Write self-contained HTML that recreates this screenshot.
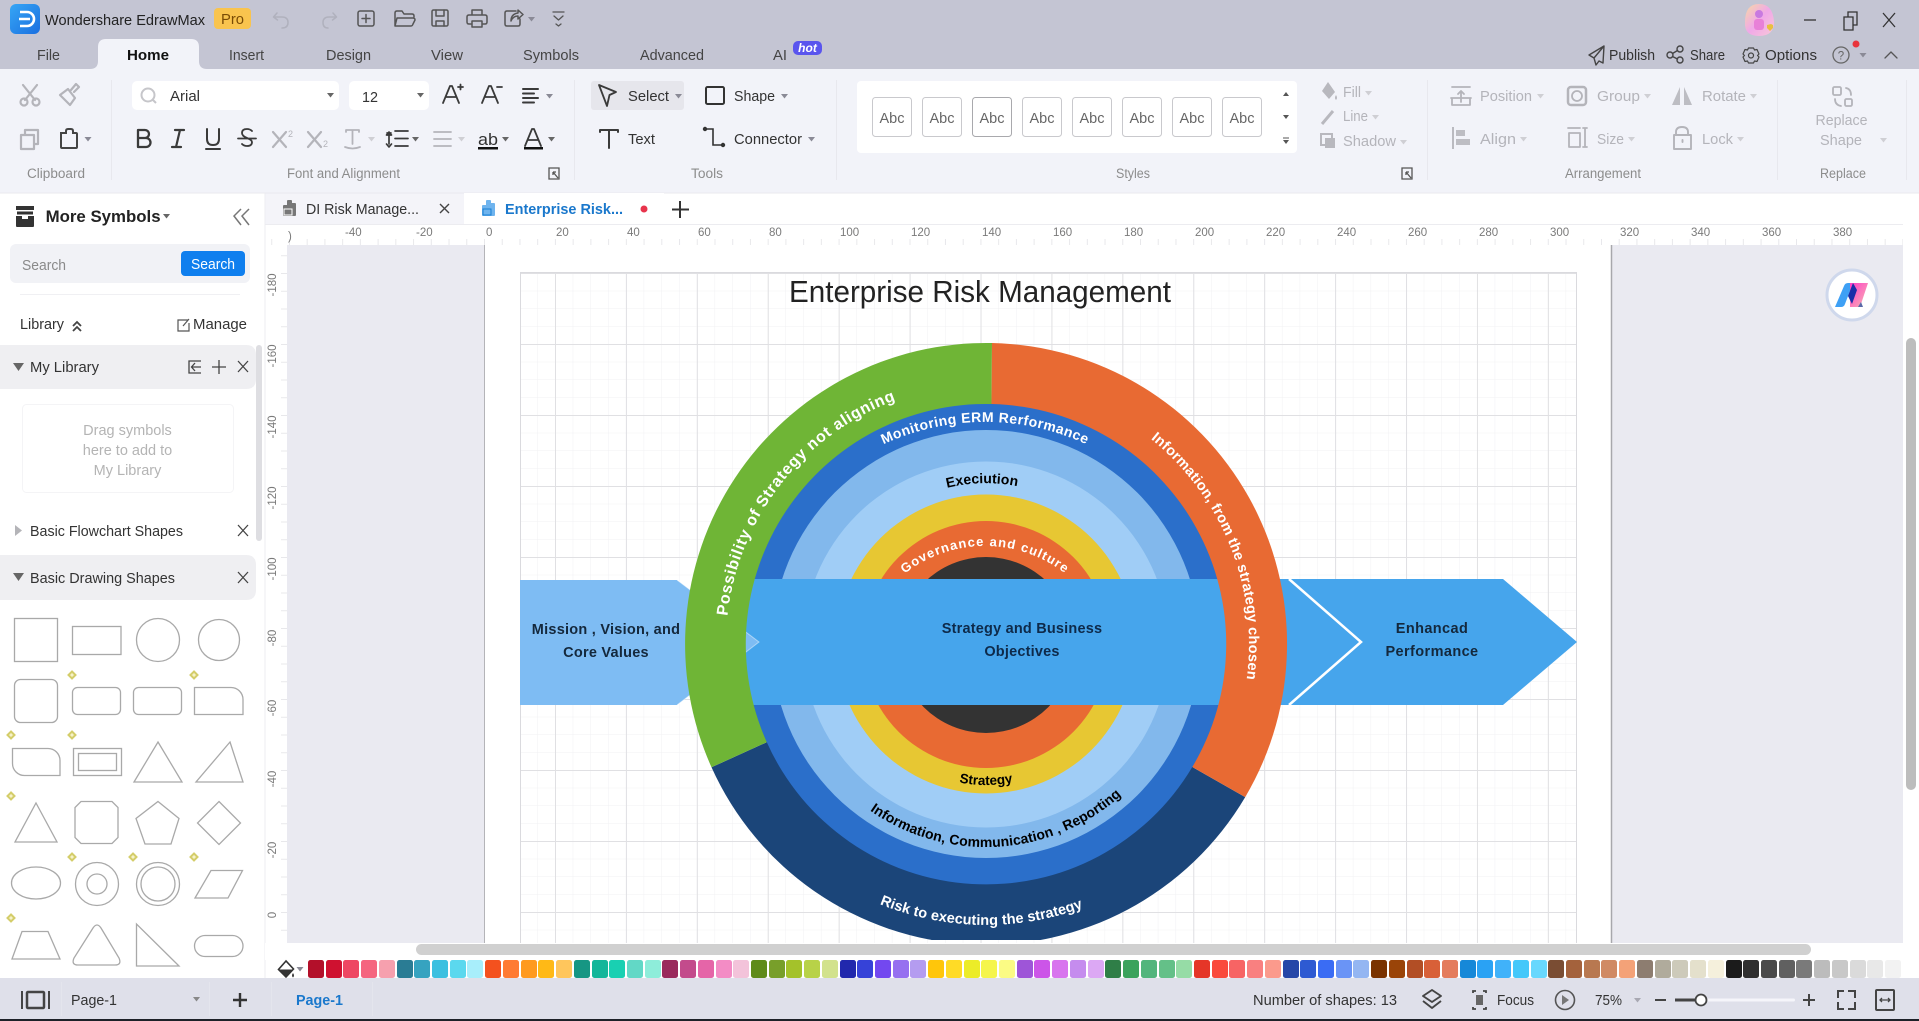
<!DOCTYPE html>
<html><head><meta charset="utf-8"><title>Wondershare EdrawMax</title>
<style>
html,body{margin:0;padding:0;width:1919px;height:1021px;overflow:hidden;background:#fff}
svg{position:absolute;left:0;top:0;display:block}
text{font-family:"Liberation Sans",Arial,sans-serif;font-size:14.5px;fill:#333}
.l{fill:#8c8c8c;font-size:13.5px}
.d{fill:#b4b4ba}
.m{text-anchor:middle}
.r{fill:#7a7a7a;font-size:11.5px}
.ic{fill:none;stroke:#555;stroke-width:1.8;stroke-linejoin:round;stroke-linecap:round}
.ig{fill:none;stroke:#b4b4ba;stroke-width:1.8;stroke-linejoin:round;stroke-linecap:round}
.k{fill:none;stroke:#3a3a3a;stroke-width:1.9;stroke-linecap:round;stroke-linejoin:round}
.s{fill:none;stroke:#a9a9a9;stroke-width:1.3}
.h{fill:#f6f2c8;stroke:#d4cd6a;stroke-width:2}
.b{font-weight:bold;letter-spacing:.4px}
.w{fill:#fff}
#pal{position:absolute;left:308px;top:960px;display:flex;gap:1.73px;z-index:2}
#pal i{display:block;width:16px;height:18px;border-radius:2.5px}
</style></head><body>
<svg width="1919" height="1021" viewBox="0 0 1919 1021">
<defs>
<pattern id="gm" x="555" y="273" width="17.73" height="17.75" patternUnits="userSpaceOnUse"><path d="M0 0V17.75M0 0H17.73" stroke="#f1f1f3" stroke-width="1" fill="none"/></pattern>
<pattern id="gM" x="555" y="273" width="70.92" height="71" patternUnits="userSpaceOnUse"><path d="M.5 0V71M0 .5H71" stroke="#e0e0e3" stroke-width="1" fill="none"/></pattern>
<pattern id="rh" x="484" y="224" width="17.73" height="21" patternUnits="userSpaceOnUse"><path d="M.5 15V21" stroke="#e8e8eb" fill="none"/></pattern>
<pattern id="rv" x="265" y="273" width="22" height="17.75" patternUnits="userSpaceOnUse"><path d="M16 .5H22" stroke="#e8e8eb" fill="none"/></pattern>
<clipPath id="cc"><rect x="480" y="245" width="1140" height="695"/></clipPath>
<linearGradient id="lg" x1="0" y1="0" x2="1" y2="1"><stop offset="0" stop-color="#36a6f5"/><stop offset="1" stop-color="#1a6fe0"/></linearGradient>
<linearGradient id="av" x1="0" y1="0" x2="1" y2="1"><stop offset="0" stop-color="#f6d9a5"/><stop offset=".5" stop-color="#f0a8e8"/><stop offset="1" stop-color="#f8c8d8"/></linearGradient>
<linearGradient id="pk" x1="0" y1="0" x2="1" y2="1"><stop offset="0" stop-color="#ff3dc8"/><stop offset="1" stop-color="#f8b8b0"/></linearGradient>
<path id="a1" d="M726 644A260 260 0 0 1 923.1 391.7"/>
<path id="a2" d="M1117.5 416.2A263 263 0 0 1 1240 712.1"/>
<path id="a3" d="M830 478.4A241 241 0 0 1 1140 478.4"/>
<path id="a4" d="M906 504.4A161 161 0 0 1 1059.1 500.7"/>
<path id="a5" d="M885.4 592.4A130 130 0 0 1 1084.6 592.4"/>
<path id="a6" d="M915 766A142 142 0 0 0 1057 766"/>
<path id="a7" d="M830.5 774.5A203 203 0 0 0 1156.3 754.6"/>
<path id="a8" d="M805.4 859.2A281 281 0 0 0 1159 865.4"/>
<path id="tr" d="M0 0h7l-3.5 4.5z"/>
</defs>

<!-- chrome backgrounds -->
<rect width="1919" height="69" fill="#c4c5d3"/>
<rect y="69" width="1919" height="124" fill="#f2f3f9"/>
<rect y="193" width="1919" height="785" fill="#fff"/>
<rect x="265" y="193" width="199" height="31" fill="#f4f4f9"/>
<rect x="287" y="245" width="1616" height="698" fill="#eaeaf1"/>
<rect x="265" y="224" width="1638" height="21" fill="#fff"/>
<rect x="265" y="224" width="1638" height="21" fill="url(#rh)"/>
<rect x="265" y="245" width="22" height="698" fill="url(#rv)"/>
<path d="M265 193V978" stroke="#eeeef2"/>
<path d="M265 224.500H1903" stroke="#ececf0"/>
<rect y="192.500" width="1919" height="1" fill="#e9e9ee"/>

<!-- home tab -->
<path d="M90 69q8 0 8-8V47q0-8 8-8h85q8 0 8 8v14q0 8 8 8z" fill="#f2f3f9"/>

<!-- title bar -->
<rect x="10" y="4" width="30" height="30" rx="6" fill="url(#lg)"/>
<path d="M20 12h7a7 7 0 0 1 0 14h-7M19 19h11" fill="none" stroke="#fff" stroke-width="2.6"/>
<text x="45" y="25" font-size="15" textLength="160" lengthAdjust="spacingAndGlyphs" style="fill:#222">Wondershare EdrawMax</text>
<rect x="214" y="8" width="37" height="21" rx="4" fill="#f9c44e"/>
<text x="221" y="24" textLength="23" lengthAdjust="spacingAndGlyphs" style="fill:#7a4c05;font-size:15px">Pro</text>
<path class="ig" d="M277 13l-3.500 4 4 3M274 17h8q6 0 6 5.500t-6 5.500" style="stroke:#b0b1bd;stroke-width:1.500"/>
<path class="ig" d="M333 13l3.500 4-4 3M336 17h-7q-6 0-6 5.500t5 5.500" style="stroke:#b0b1bd;stroke-width:1.500"/>
<rect class="ic" x="358" y="11" width="16" height="15" rx="2" style="stroke-width:1.500"/><path class="ic" d="M366 14.500v8M362 18.500h8" style="stroke-width:1.500"/>
<path class="ic" d="M395 26V13q0-2 2-2h5l2 3h8q2 0 2 2v1M395 26q0 0 2-8h16q2 0 2 2l-2 4q-.5 2-2 2z" style="stroke-width:1.500"/>
<rect class="ic" x="432" y="10" width="16" height="16" rx="1.500" style="stroke-width:1.500"/><path class="ic" d="M436 10v6h8v-6M436 26v-5h8v5" style="stroke-width:1.500"/>
<path class="ic" d="M472 15v-5h10v5M471 24h-2q-2 0-2-2v-5q0-2 2-2h16q2 0 2 2v5q0 2-2 2h-2M472 21h10v6h-10z" style="stroke-width:1.500"/>
<path class="ic" d="M516 11h-9q-2 0-2 2v11q0 2 2 2h11q2 0 2-2v-5M511 21q0-7 7-8v-3l5 4.500-5 4.500v-3q-5 0-7 5z" style="stroke-width:1.500"/>
<use href="#tr" x="528" y="17" fill="#8a8a96"/>
<path class="ic" d="M553 12h11M554 16l4.500 4 4.500-4M556 24l2.500 2 2.500-2" style="stroke-width:1.300"/>

<!-- menu -->
<g style="fill:#444">
<text x="37" y="60" textLength="23" lengthAdjust="spacingAndGlyphs" style="fill:#444">File</text>
<text x="127" y="60" textLength="42" lengthAdjust="spacingAndGlyphs" style="fill:#111;font-weight:bold">Home</text>
<text x="229" y="60" textLength="35" lengthAdjust="spacingAndGlyphs" style="fill:#444">Insert</text>
<text x="326" y="60" textLength="45" lengthAdjust="spacingAndGlyphs" style="fill:#444">Design</text>
<text x="431" y="60" textLength="32" lengthAdjust="spacingAndGlyphs" style="fill:#444">View</text>
<text x="523" y="60" textLength="56" lengthAdjust="spacingAndGlyphs" style="fill:#444">Symbols</text>
<text x="640" y="60" textLength="64" lengthAdjust="spacingAndGlyphs" style="fill:#444">Advanced</text>
<text x="773" y="60" textLength="14" lengthAdjust="spacingAndGlyphs" style="fill:#444">AI</text>
</g>
<rect x="793" y="41" width="29" height="14" rx="5" fill="#5a55ee"/>
<text x="807.500" y="52" class="m" style="fill:#fff;font-style:italic;font-size:12px;font-weight:bold">hot</text>

<!-- window -->
<path d="M1745 22q0-18 14-18t15 18q0 14-15 14t-14-14z" fill="url(#av)"/>
<circle cx="1759" cy="14" r="4" fill="#c87ae0"/><rect x="1754" y="19" width="10" height="11" rx="3" fill="#e880d8"/><path d="M1767 25l4-1 2 1v3l-3 3-3-3z" fill="#e8c040"/>
<path d="M1804 20h12" stroke="#333" stroke-width="1.300"/>
<path d="M1844 17h9v13h-9zM1848 17v-5h9v13h-4" fill="none" stroke="#333" stroke-width="1.300"/>
<path d="M1883 13l12 14M1895 13l-12 14" stroke="#333" stroke-width="1.300"/>
<path class="ic" d="M1604 46l-15 9 5 3 2 7 3-4 4 2zM1604 46l-10 12" style="stroke:#444;stroke-width:1.400"/>
<text x="1609" y="60" textLength="46" lengthAdjust="spacingAndGlyphs">Publish</text>
<circle class="ic" cx="1670" cy="55" r="3" style="stroke:#444;stroke-width:1.400"/><circle class="ic" cx="1680" cy="49" r="3" style="stroke:#444;stroke-width:1.400"/><circle class="ic" cx="1680" cy="60" r="3" style="stroke:#444;stroke-width:1.400"/><path class="ic" d="M1672.500 53.500l5-3M1672.500 56.500l5 2.500" style="stroke:#444;stroke-width:1.400"/>
<text x="1690" y="60" textLength="35" lengthAdjust="spacingAndGlyphs">Share</text>
<path class="ic" d="M1748.500 48h5l1 2 2.500-.5 2 4.500-1.500 1.500 1.500 1.500-2 4.500-2.500-.5-1 2h-5l-1-2-2.500.5-2-4.500 1.500-1.500-1.500-1.500 2-4.500 2.500.5z" style="stroke:#444;stroke-width:1.200"/><circle class="ic" cx="1751" cy="55.500" r="2.500" style="stroke:#444;stroke-width:1.200"/>
<text x="1765" y="60" textLength="52" lengthAdjust="spacingAndGlyphs">Options</text>
<circle class="ic" cx="1841" cy="55" r="8" style="stroke:#666;stroke-width:1.300"/><text x="1841" y="59.500" class="m" style="font-size:11.500px;fill:#666">?</text>
<circle cx="1856" cy="44" r="3.500" fill="#e8343c"/><use href="#tr" x="1859.500" y="53" fill="#8a8a96"/>
<path class="ic" d="M1885 58l6-6 6 6" style="stroke:#555;stroke-width:1.300"/>

<!-- clipboard -->
<g class="ig" style="stroke-width:2.200">
<path d="M23 85l12 15M37 85l-12 15"/><circle cx="24" cy="102" r="3.500"/><circle cx="36" cy="102" r="3.500"/>
<path d="M60 95l8-6 7 9-5 7zM71 90l5-6 3 3-5 5" />
<path d="M21 135h13v14h-13zM25 135v-5h13v14h-4"/>
</g>
<path d="M62 133h4v-2q0-2 2-2h3q2 0 2 2v2h3q1 0 1 1v13q0 1-1 1H62q-1 0-1-1v-14z" fill="none" stroke="#444" stroke-width="2"/>
<use href="#tr" x="84.500" y="137" fill="#8a8a96"/>
<path d="M111.500 80V180M574.500 80V180M836.500 80V180M1427.500 80V180M1777.500 80V180M1906.500 80V180" stroke="#e8e8ee"/>
<text x="27" y="178" class="l" textLength="58" lengthAdjust="spacingAndGlyphs">Clipboard</text>

<!-- font boxes -->
<rect x="132" y="81" width="207" height="29" rx="5" fill="#fff"/>
<rect x="349" y="81" width="80" height="29" rx="5" fill="#fff"/>
<circle cx="148" cy="95" r="6.500" fill="none" stroke="#c6c6ca" stroke-width="2"/><path d="M153 100l3 3" stroke="#c6c6ca" stroke-width="2"/>
<text x="170" y="101" textLength="30" lengthAdjust="spacingAndGlyphs">Arial</text>
<use href="#tr" x="327" y="93" fill="#666"/>
<text x="362" y="102" textLength="16" lengthAdjust="spacingAndGlyphs">12</text>
<use href="#tr" x="417" y="93" fill="#666"/>
<path class="k" d="M443 103l7-17h2l7 17M446 97h10M458 87h5M460.500 84.500v5" style="stroke-width:1.800"/>
<path class="k" d="M482 103l7-17h2l7 17M485 97h10M497 87h5" style="stroke-width:1.800"/>
<path class="k" d="M523 89h15M523 93.500h11M523 98h15M523 102.500h11" style="stroke-width:2"/>
<use href="#tr" x="546" y="94" fill="#8a8a96"/>
<path class="k" d="M138 130h7a4 4 0 0 1 0 8h-7zM138 138h8a4.500 4.500 0 0 1 0 9h-8z" style="stroke-width:2.300"/>
<path class="k" d="M175 130h9M172 147h9M180 130l-4 17" style="stroke-width:2.200"/>
<path class="k" d="M207 129v10q0 6 6 6t6-6v-10M206 149h14" style="stroke-width:2"/>
<path class="k" d="M252 131q-2-2-5-2-5 0-5 4 0 3 5 5t5 4q0 4-5 4-3 0-5-2M238 138.500h18" style="stroke-width:1.800"/>
<path class="ig" d="M273 132l13 15M286 132l-13 15" style="stroke-width:2.200"/><text x="288" y="137" class="d" style="font-size:9px">2</text>
<path class="ig" d="M308 132l13 15M321 132l-13 15" style="stroke-width:2.200"/><text x="323" y="147" class="d" style="font-size:9px">2</text>
<path class="ig" d="M346 130h13M352.500 130v14M346 130v2M359 130v2M345 147q7.500 3 15 0" />
<use href="#tr" x="368" y="137" fill="#cfcfd4"/>
<path class="k" d="M389 132l-2.500 3h5zM387 133h4M389 133v11M386.500 144l2.500 3 2.500-3M395 131h13M395 138.500h13M395 146h13" style="stroke-width:1.700"/>
<use href="#tr" x="412" y="137" fill="#666"/>
<path class="ig" d="M434 132h17M434 139h17M434 146h17"/>
<use href="#tr" x="458" y="137" fill="#cfcfd4"/>
<text x="478" y="145" style="font-size:17px;fill:#333" textLength="20" lengthAdjust="spacingAndGlyphs">ab</text><rect x="478" y="147" width="20" height="2.500" fill="#111"/>
<use href="#tr" x="502" y="137" fill="#666"/>
<path class="k" d="M525 146l7-17h2l7 17M528 140h10" style="stroke-width:1.800"/><rect x="524" y="147" width="19" height="2.500" fill="#111"/>
<use href="#tr" x="548" y="137" fill="#666"/>
<text x="287" y="178" class="l" textLength="113" lengthAdjust="spacingAndGlyphs">Font and Alignment</text>
<path d="M549 168h10v11h-10zM553 172l5 6M553 172h3M553 172v3" fill="none" stroke="#555" stroke-width="1.300"/>

<!-- tools -->
<rect x="591" y="81" width="93" height="29" rx="3" fill="#e6e6ec"/>
<path class="k" d="M599 85l17 7-6.500 3-2.500 11z" style="stroke-width:1.800"/>
<text x="628" y="101" textLength="41" lengthAdjust="spacingAndGlyphs">Select</text>
<use href="#tr" x="675" y="94" fill="#8a8a96"/>
<rect x="706" y="87" width="18" height="17" rx="1.500" fill="none" stroke="#333" stroke-width="2"/>
<text x="734" y="101" textLength="41" lengthAdjust="spacingAndGlyphs">Shape</text>
<use href="#tr" x="781" y="94" fill="#8a8a96"/>
<path class="k" d="M600 130h18M600 130v2M618 130v2M609 130v18" style="stroke-width:2"/>
<text x="628" y="144" textLength="27" lengthAdjust="spacingAndGlyphs">Text</text>
<path d="M706 129h7v16h9" fill="none" stroke="#333" stroke-width="1.600"/><circle cx="705" cy="129" r="2.200" fill="#333"/><circle cx="723" cy="145" r="2.200" fill="#333"/>
<text x="734" y="144" textLength="68" lengthAdjust="spacingAndGlyphs">Connector</text>
<use href="#tr" x="808" y="137" fill="#8a8a96"/>
<text x="691" y="178" class="l" textLength="32" lengthAdjust="spacingAndGlyphs">Tools</text>

<!-- styles -->
<rect x="857" y="81" width="440" height="72" rx="4" fill="#fff"/>
<g fill="#fff" stroke="#c9c9cd">
<rect x="872.500" y="97.500" width="39" height="39" rx="3"/><rect x="922.500" y="97.500" width="39" height="39" rx="3"/><rect x="972.500" y="97.500" width="39" height="39" rx="3" stroke="#a9a9ad"/><rect x="1022.500" y="97.500" width="39" height="39" rx="3"/><rect x="1072.500" y="97.500" width="39" height="39" rx="3"/><rect x="1122.500" y="97.500" width="39" height="39" rx="3"/><rect x="1172.500" y="97.500" width="39" height="39" rx="3"/><rect x="1222.500" y="97.500" width="39" height="39" rx="3"/>
</g>
<g style="font-size:14px">
<text x="892" y="123" class="m" style="fill:#666">Abc</text><text x="942" y="123" class="m" style="fill:#666">Abc</text><text x="992" y="123" class="m" style="fill:#666">Abc</text><text x="1042" y="123" class="m" style="fill:#666">Abc</text><text x="1092" y="123" class="m" style="fill:#666">Abc</text><text x="1142" y="123" class="m" style="fill:#666">Abc</text><text x="1192" y="123" class="m" style="fill:#666">Abc</text><text x="1242" y="123" class="m" style="fill:#666">Abc</text>
</g>
<path d="M1283 96l3-4 3 4zM1283 115l3 4 3-4zM1283 137h6M1283 140l3 4 3-4z" fill="#555" stroke="none"/><path d="M1283 138h6" stroke="#555"/>
<path d="M1328 82l-6 9 7 8 6-7zM1336 95q2 3 0 5-2-2 0-5z" fill="#b8b8be"/>
<text x="1343" y="97" class="d" textLength="18" lengthAdjust="spacingAndGlyphs">Fill</text><use href="#tr" x="1365" y="91" fill="#cfcfd4"/>
<path d="M1322 124l11-13" stroke="#b8b8be" stroke-width="3"/>
<text x="1343" y="121" class="d" textLength="25" lengthAdjust="spacingAndGlyphs">Line</text><use href="#tr" x="1372" y="115" fill="#cfcfd4"/>
<rect x="1321" y="134" width="11" height="11" fill="none" stroke="#b8b8be" stroke-width="2"/><rect x="1325" y="138" width="10" height="10" fill="#b8b8be"/>
<text x="1343" y="146" class="d" textLength="53" lengthAdjust="spacingAndGlyphs">Shadow</text><use href="#tr" x="1400" y="140" fill="#cfcfd4"/>
<text x="1116" y="178" class="l" textLength="34" lengthAdjust="spacingAndGlyphs">Styles</text>
<path d="M1402 168h10v11h-10zM1406 172l5 6M1406 172h3M1406 172v3" fill="none" stroke="#555" stroke-width="1.300"/>

<!-- arrangement -->
<path class="ig" d="M1452 87h18M1461 102V91M1458 94l3-3 3 3M1452 98v7h18v-7z M1451 98h20"/>
<text x="1480" y="101" class="d" textLength="52" lengthAdjust="spacingAndGlyphs">Position</text><use href="#tr" x="1537" y="94" fill="#cfcfd4"/>
<rect class="ig" x="1568" y="87" width="18" height="18" rx="3" style="stroke-width:2.500"/><circle class="ig" cx="1577" cy="96" r="5"/>
<text x="1597" y="101" class="d" textLength="43" lengthAdjust="spacingAndGlyphs">Group</text><use href="#tr" x="1644" y="94" fill="#cfcfd4"/>
<path d="M1680 87l-8 18h8zM1684 87l8 18h-8z" fill="#bdbdc3"/>
<text x="1702" y="101" class="d" textLength="44" lengthAdjust="spacingAndGlyphs">Rotate</text><use href="#tr" x="1750" y="94" fill="#cfcfd4"/>
<path d="M1453 127v22" stroke="#b4b4ba" stroke-width="1.800"/><rect x="1456" y="130" width="9" height="6" fill="#bdbdc3"/><rect x="1456" y="139" width="14" height="6" fill="#bdbdc3"/>
<text x="1480" y="144" class="d" textLength="36" lengthAdjust="spacingAndGlyphs">Align</text><use href="#tr" x="1520" y="137" fill="#cfcfd4"/>
<path class="ig" d="M1568 128h12M1569 133h11v14h-11zM1585 128v19M1583 128h4M1583 147h4"/>
<text x="1597" y="144" class="d" textLength="27" lengthAdjust="spacingAndGlyphs">Size</text><use href="#tr" x="1628" y="137" fill="#cfcfd4"/>
<path class="ig" d="M1676 135v-3q0-5 6-5t6 5v3M1674 135h17v14h-17zM1682.500 140v2" style="stroke-width:1.900"/>
<text x="1702" y="144" class="d" textLength="31" lengthAdjust="spacingAndGlyphs">Lock</text><use href="#tr" x="1737" y="137" fill="#cfcfd4"/>
<text x="1565" y="178" class="l" textLength="76" lengthAdjust="spacingAndGlyphs">Arrangement</text>
<rect class="ig" x="1833" y="87" width="8" height="8" rx="1.500"/><rect class="ig" x="1845" y="99" width="7" height="7" rx="1.500"/><path class="ig" d="M1846 88q5 1 5 7M1841 106q-6-1-6-7"/>
<text x="1815.500" y="125" class="d" textLength="52" lengthAdjust="spacingAndGlyphs">Replace</text>
<text x="1820" y="145" class="d" textLength="42" lengthAdjust="spacingAndGlyphs">Shape</text>
<use href="#tr" x="1880" y="138" fill="#cfcfd4"/>
<text x="1820" y="178" class="l" textLength="46" lengthAdjust="spacingAndGlyphs">Replace</text>

<!-- doc tabs -->
<rect x="464" y="193" width="200" height="31" fill="#fff"/>
<path d="M283 215v-9q0-1 1-1h3v-4q0-1 1-1h3q1 0 1 1v2h3q1 0 1 1v11q0 1-1 1h-11q-1 0-1-1z" fill="#777"/><rect x="284" y="209" width="8" height="6" fill="none" stroke="#fff"/>
<text x="306" y="214" textLength="113" lengthAdjust="spacingAndGlyphs">DI Risk Manage...</text>
<path d="M440 204l9 9M449 204l-9 9" stroke="#444" stroke-width="1.400"/>
<path d="M482 215v-9q0-1 1-1h3v-4q0-1 1-1h3q1 0 1 1v2h3q1 0 1 1v11q0 1-1 1h-11q-1 0-1-1z" fill="#6fb4ee"/><rect x="483" y="209" width="8" height="6" fill="none" stroke="#1a7fd4"/>
<text x="505" y="214" textLength="118" lengthAdjust="spacingAndGlyphs" style="fill:#1a78cc;font-weight:bold">Enterprise Risk...</text>
<circle cx="644" cy="209" r="3.500" fill="#e8344c"/>
<path d="M680 201v17M672 209.500h17" stroke="#333" stroke-width="2"/>

<!-- rulers -->
<g class="r">
<text x="288" y="240" class="r">)</text>
<text x="345" y="236" class="r">-40</text><text x="416" y="236" class="r">-20</text><text x="486" y="236" class="r">0</text><text x="556" y="236" class="r">20</text><text x="627" y="236" class="r">40</text><text x="698" y="236" class="r">60</text><text x="769" y="236" class="r">80</text><text x="840" y="236" class="r">100</text><text x="911" y="236" class="r">120</text><text x="982" y="236" class="r">140</text><text x="1053" y="236" class="r">160</text><text x="1124" y="236" class="r">180</text><text x="1195" y="236" class="r">200</text><text x="1266" y="236" class="r">220</text><text x="1337" y="236" class="r">240</text><text x="1408" y="236" class="r">260</text><text x="1479" y="236" class="r">280</text><text x="1550" y="236" class="r">300</text><text x="1620" y="236" class="r">320</text><text x="1691" y="236" class="r">340</text><text x="1762" y="236" class="r">360</text><text x="1833" y="236" class="r">380</text>
</g>
<text transform="translate(276 285) rotate(-90)" class="r m">-180</text>
<text transform="translate(276 356) rotate(-90)" class="r m">-160</text>
<text transform="translate(276 427) rotate(-90)" class="r m">-140</text>
<text transform="translate(276 498) rotate(-90)" class="r m">-120</text>
<text transform="translate(276 569) rotate(-90)" class="r m">-100</text>
<text transform="translate(276 638) rotate(-90)" class="r m">-80</text>
<text transform="translate(276 708) rotate(-90)" class="r m">-60</text>
<text transform="translate(276 779) rotate(-90)" class="r m">-40</text>
<text transform="translate(276 850) rotate(-90)" class="r m">-20</text>
<text transform="translate(276 915) rotate(-90)" class="r m">0</text>

<!-- page -->
<rect x="485" y="245" width="1126" height="698" fill="#fff"/>
<path d="M484.500 245V943" stroke="#b4b4b8"/><path d="M1611.500 245V943" stroke="#a8a8ac" stroke-width="1.500"/>
<rect x="520" y="272" width="1057" height="671" fill="url(#gm)"/>
<rect x="520" y="272" width="1057" height="671" fill="url(#gM)"/>
<path d="M520.500 943V272.500H1576.500V943" fill="none" stroke="#dadade"/>

<!-- diagram -->
<text x="980" y="302" class="m" style="font-size:30.500px;fill:#222" textLength="382" lengthAdjust="spacingAndGlyphs">Enterprise Risk Management</text>
<g clip-path="url(#cc)">
<path d="M1224 579H1503L1577 642 1503 705H1224z" fill="#46a5ec"/>
<circle cx="986" cy="644" r="241" fill="#2b6fca"/>
<circle cx="986" cy="644" r="214" fill="#82b8ec"/>
<circle cx="986" cy="644.500" r="183" fill="#a0cdf6"/>
<circle cx="986" cy="644" r="149.500" fill="#e7c733"/>
<circle cx="986" cy="644.500" r="123.500" fill="#e86a33"/>
<circle cx="986" cy="645" r="88" fill="#333"/>
<path d="M740 579H1289L1361 642 1289 705H740z" fill="#46a5ec"/>
<path d="M1289 579L1361 642 1289 705" fill="none" stroke="#fff" stroke-width="2.500"/>
<path d="M520 580H677L759 642 677 705H520z" fill="#7ebcf3"/>
<path d="M677 580L759 642 677 705" fill="none" stroke="#fff" stroke-width="1" opacity=".45"/>
<path d="M711.500 767.300A301 301 0 0 0 1245.200 797.100L1192.300 767A240 240 0 0 1 766.800 742.200z" fill="#1b4579"/>
<path d="M992 343.060A301 301 0 0 0 711.500 767.300L766.800 742.200A240 240 0 0 1 991.500 404.060z" fill="#6fb536"/>
<path d="M992 343.060A301 301 0 0 1 1245.200 797.100L1192.300 767A240 240 0 0 0 991.500 404.060z" fill="#e86a33"/>
<g style="font-weight:bold">
<text style="fill:#fff;font-size:16px;font-weight:bold;letter-spacing:.7px" text-anchor="middle"><textPath href="#a1" startOffset="50%">Possibility of Strategy not aligning</textPath></text>
<text style="fill:#fff;font-size:14.500px;font-weight:bold;letter-spacing:.25px" text-anchor="middle"><textPath href="#a2" startOffset="51%">Information, from the strategy chosen</textPath></text>
<text style="fill:#fff;font-size:14px;font-weight:bold;letter-spacing:.45px" text-anchor="middle"><textPath href="#a3" startOffset="50%">Monitoring ERM Rerformance</textPath></text>
<text style="fill:#000;font-size:14px;font-weight:bold" text-anchor="middle"><textPath href="#a4" startOffset="50%">Execiution</textPath></text>
<text style="fill:#fff;font-size:13px;font-weight:bold;letter-spacing:1.1px" text-anchor="middle"><textPath href="#a5" startOffset="50%">Governance and culture</textPath></text>
<text style="fill:#000;font-size:13.500px;font-weight:bold" text-anchor="middle"><textPath href="#a6" startOffset="50%">Strategy</textPath></text>
<text style="fill:#000;font-size:14px;font-weight:bold;letter-spacing:.08px" text-anchor="middle"><textPath href="#a7" startOffset="50%">Information, Communication , Reporting</textPath></text>
<text style="fill:#fff;font-size:14.500px;font-weight:bold;letter-spacing:.05px" text-anchor="middle"><textPath href="#a8" startOffset="50%">Risk to executing the strategy</textPath></text>
</g>
</g>
<g style="font-weight:bold">
<text x="1022" y="633" class="m" style="font-size:14.500px;font-weight:bold;fill:#0e2a4a;letter-spacing:.2px">Strategy and Business</text>
<text x="1022" y="656" class="m" style="font-size:14.500px;font-weight:bold;fill:#0e2a4a;letter-spacing:.2px">Objectives</text>
<text x="606" y="634" class="m" style="font-size:14.500px;font-weight:bold;fill:#14283c;letter-spacing:.25px">Mission , Vision, and</text>
<text x="606" y="657" class="m" style="font-size:14.500px;font-weight:bold;fill:#14283c;letter-spacing:.25px">Core Values</text>
<text x="1432" y="633" class="m" style="font-size:14.500px;font-weight:bold;fill:#14283c;letter-spacing:.4px">Enhancad</text>
<text x="1432" y="656" class="m" style="font-size:14.500px;font-weight:bold;fill:#14283c;letter-spacing:.4px">Performance</text>
</g>

<!-- scroll bars -->
<rect x="265" y="943" width="1654" height="17" fill="#fff"/>
<rect x="416" y="944" width="1395" height="11" rx="5.500" fill="#d0d0d0"/>
<rect x="1903" y="224" width="16" height="736" fill="#fff"/>
<rect x="1906" y="338" width="10" height="452" rx="5" fill="#bdbdbd"/>

<!-- badge -->
<circle cx="1852" cy="295" r="25" fill="#fff" stroke="#cfd8ec" stroke-width="3"/>
<path d="M1835 307l9-21q1-3 4-3h5l-8 21q-1 3-4 3z" fill="#3ea0f5"/>
<path d="M1850 283h18l-8 24h-10z" fill="url(#pk)"/>
<path d="M1853 283l-5 13 4 8 5-14z" fill="#1a2ea8"/>
<path d="M1858 307l3-5 2 5z" fill="#5a6aa8"/>

<!-- sidebar -->
<rect x="16" y="206" width="18" height="4" fill="#333"/><rect x="17" y="211.500" width="16" height="3" fill="#333"/><path d="M16 216h6v3h6v-3h6v10q0 1-1 1H17q-1 0-1-1z" fill="#333"/>
<text x="45.600" y="222" textLength="115" lengthAdjust="spacingAndGlyphs" style="font-size:16.500px;font-weight:bold;fill:#222">More Symbols</text>
<use href="#tr" x="163" y="214" fill="#666"/>
<path d="M241 209l-7 7 7 9M249 209l-7 7 7 9" fill="none" stroke="#777" stroke-width="1.500"/>
<rect x="10" y="244" width="240" height="39" rx="6" fill="#f1f2f6"/>
<text x="22" y="270" textLength="44" lengthAdjust="spacingAndGlyphs" style="fill:#8a8a8a">Search</text>
<rect x="181" y="251" width="64" height="25" rx="4" fill="#0f7fee"/>
<text x="191" y="269" textLength="44" lengthAdjust="spacingAndGlyphs" style="fill:#fff">Search</text>
<path d="M20 294.500H240" stroke="#f0f0f3"/>
<text x="20" y="329" textLength="44" lengthAdjust="spacingAndGlyphs">Library</text>
<path d="M73 326l4-4 4 4M73 331l4-4 4 4" fill="none" stroke="#444" stroke-width="1.800"/>
<path d="M188 320h-10v11h11v-8M183 326l6-7" fill="none" stroke="#555" stroke-width="1.200"/>
<text x="193" y="329" textLength="54" lengthAdjust="spacingAndGlyphs">Manage</text>
<path d="M0 345H246q10 0 10 10v24q0 10-10 10H0z" fill="#efeff2"/>
<path d="M13 363h11l-5.500 8z" fill="#666"/>
<text x="30" y="372" textLength="69" lengthAdjust="spacingAndGlyphs">My Library</text>
<path d="M201 361h-12v12h12M201 367h-9M195 363l-3.500 4 3.500 4" fill="none" stroke="#444" stroke-width="1.300"/>
<path d="M219 360v14M212 367h14M238 361l10 11M248 361l-10 11" fill="none" stroke="#444" stroke-width="1.300"/>
<rect x="22.500" y="404.500" width="211" height="88" rx="4" fill="none" stroke="#f4f4f6"/>
<text x="127.500" y="435" class="m" style="fill:#b4b4b4">Drag symbols</text>
<text x="127.500" y="455" class="m" style="fill:#b4b4b4">here to add to</text>
<text x="127.500" y="475" class="m" style="fill:#b4b4b4">My Library</text>
<rect x="256" y="345" width="6" height="196" rx="3" fill="#dedee2"/>
<path d="M15 525v11l7-5.500z" fill="#b4b4b8"/>
<text x="30" y="536" textLength="153" lengthAdjust="spacingAndGlyphs">Basic Flowchart Shapes</text>
<path d="M238 525l10 11M248 525l-10 11" stroke="#444" stroke-width="1.300"/>
<path d="M0 555H246q10 0 10 10v25q0 10-10 10H0z" fill="#efeff2"/>
<path d="M13 573h11l-5.500 8z" fill="#666"/>
<text x="30" y="583" textLength="145" lengthAdjust="spacingAndGlyphs">Basic Drawing Shapes</text>
<path d="M238 572l10 11M248 572l-10 11" stroke="#444" stroke-width="1.300"/>

<!-- shapes -->
<g class="s">
<rect class="s" x="14.500" y="618.500" width="43" height="43"/>
<rect class="s" x="72.500" y="626.500" width="48.500" height="28"/>
<circle class="s" cx="158" cy="640" r="21.500"/>
<circle class="s" cx="219" cy="640" r="20.500"/>
<rect class="s" x="14.500" y="679.500" width="43" height="43" rx="6"/>
<rect class="s" x="72.500" y="687.500" width="48" height="27" rx="5"/>
<rect class="s" x="133.500" y="687.500" width="48" height="27" rx="5"/>
<path class="s" d="M194.500 687.500H231a12 12 0 0 1 12 12v15H194.500z"/>
<path class="s" d="M12.500 748.500H48a12 12 0 0 1 12 12v15H24.500a12 12 0 0 1-12-12z"/>
<rect class="s" x="73.500" y="748.500" width="48" height="27"/>
<rect class="s" x="78.500" y="753.500" width="38" height="17"/>
<path class="s" d="M158 742l24 40h-48z"/>
<path class="s" d="M230 742l13 40h-47z"/>
<path class="s" d="M36 803l21 39H15z"/>
<path class="s" d="M81 801.500h31l6 6v30l-6 6H81l-6-6v-30z"/>
<path class="s" d="M158 801.500l21 17-8 25.500h-26l-9-25.500z"/>
<path class="s" d="M219 801.500l21.500 21.500-21.500 21.500-21.500-21.500z"/>
<ellipse class="s" cx="36" cy="883" rx="24.500" ry="16"/>
<circle class="s" cx="97" cy="884" r="21.500"/><circle class="s" cx="97" cy="884" r="10"/>
<circle class="s" cx="158" cy="884" r="21.500"/><circle class="s" cx="158" cy="884" r="17"/>
<path class="s" d="M211 870.500h31.500l-14.500 27.500H195z"/>
<path class="s" d="M22 931.500h26l12 27.500H12z"/>
<path class="s" d="M93 928q4-6 8 0l18 30q3 7-4 7H78q-7 0-4-7z"/>
<path class="s" d="M136.500 924v42H179z"/>
<rect class="s" x="194.500" y="935.500" width="48.500" height="21" rx="10.500"/>
</g>
<g>
<path class="h" d="M72 671.500l3.500 3.500-3.500 3.500-3.500-3.500z"/><path class="h" d="M194 671.500l3.500 3.500-3.500 3.500-3.500-3.500z"/>
<path class="h" d="M11 731.500l3.500 3.500-3.500 3.500-3.500-3.500z"/><path class="h" d="M72 731.500l3.500 3.500-3.500 3.500-3.500-3.500z"/>
<path class="h" d="M11 792.500l3.500 3.500-3.500 3.500-3.500-3.500z"/>
<path class="h" d="M72 853.500l3.500 3.500-3.500 3.500-3.500-3.500z"/><path class="h" d="M133 853.500l3.500 3.500-3.500 3.500-3.500-3.500z"/><path class="h" d="M194 853.500l3.500 3.500-3.500 3.500-3.500-3.500z"/>
<path class="h" d="M11 914.500l3.500 3.500-3.500 3.500-3.500-3.500z"/>
</g>

<!-- palette icon -->
<path d="M286 961l-7.500 8.500 7.500 7.500 7.500-8z" fill="none" stroke="#333" stroke-width="1.600"/><path d="M279 969.500h14l-7 7.500z" fill="#333"/><path d="M293 973q2 3 0 4.500-2-1.500 0-4.500z" fill="#333"/>
<use href="#tr" x="296.500" y="967" fill="#8a8a96"/>

<!-- status bar -->
<rect y="978" width="1919" height="41" fill="#dfe0ea"/>
<rect y="1019" width="1919" height="2" fill="#1d2128"/>
<path d="M22 991v18M49 991v18" stroke="#444" stroke-width="2"/><rect x="27" y="992" width="17" height="16" rx="1" fill="none" stroke="#444" stroke-width="2.500"/>
<path d="M61.500 982V1016M209.500 982V1016M271.500 982V1016M372.500 982V1016" stroke="#e4e5ed"/>
<text x="71" y="1005" textLength="46" lengthAdjust="spacingAndGlyphs">Page-1</text>
<use href="#tr" x="193" y="997" fill="#888"/>
<path d="M240 993v14M233 1000h14" stroke="#333" stroke-width="2.400"/>
<text x="296" y="1005" textLength="47" lengthAdjust="spacingAndGlyphs" style="fill:#1a78cc;font-weight:bold">Page-1</text>
<text x="1253" y="1005" textLength="144" lengthAdjust="spacingAndGlyphs">Number of shapes: 13</text>
<path d="M1432 990l9 6-9 6-9-6zM1423 1001l9 7 9-7" fill="none" stroke="#444" stroke-width="1.900" stroke-linejoin="round"/>
<path d="M1473 993v-2h3M1483 991h3v2M1473 1007v2h3M1483 1009h3v-2" fill="none" stroke="#444" stroke-width="1.800"/><rect x="1476" y="995" width="7" height="10" fill="#666"/>
<text x="1497" y="1005" textLength="37" lengthAdjust="spacingAndGlyphs">Focus</text>
<circle cx="1565" cy="1000" r="9.500" fill="none" stroke="#555" stroke-width="1.600"/><path d="M1562 995l7 5-7 5z" fill="#777"/>
<text x="1595" y="1005" textLength="27" lengthAdjust="spacingAndGlyphs">75%</text>
<use href="#tr" x="1634" y="998" fill="#a8a8b2"/>
<path d="M1655 1000h11" stroke="#444" stroke-width="2"/>
<rect x="1675" y="998.500" width="120" height="3" rx="1.500" fill="#f5f5fa"/><rect x="1675" y="998.500" width="26" height="3" fill="#444"/>
<circle cx="1701" cy="1000" r="5.500" fill="#fff" stroke="#444" stroke-width="1.800"/>
<path d="M1809 994v12M1803 1000h12" stroke="#444" stroke-width="2"/>
<path d="M1838 998v-7h6M1848 991h7v7M1838 1002v7h6M1848 1009h7v-7" fill="none" stroke="#444" stroke-width="2"/>
<rect x="1876" y="990" width="18" height="20" rx="1" fill="none" stroke="#444" stroke-width="2"/><path d="M1880 1000h10M1882 998l-2 2 2 2M1888 998l2 2-2 2" fill="none" stroke="#444" stroke-width="1.300"/>
</svg>

<div id="pal"><i style="background:#b3102a"></i><i style="background:#cf1130"></i><i style="background:#ee4763"></i><i style="background:#f5657f"></i><i style="background:#f6a0ae"></i><i style="background:#2a7c94"></i><i style="background:#36a3c0"></i><i style="background:#3cc0e0"></i><i style="background:#5bd8ee"></i><i style="background:#a8eefb"></i><i style="background:#f4511e"></i><i style="background:#ff7b33"></i><i style="background:#ff9a1f"></i><i style="background:#ffb916"></i><i style="background:#ffc65c"></i><i style="background:#169683"></i><i style="background:#13b69a"></i><i style="background:#19d0b2"></i><i style="background:#62d8c6"></i><i style="background:#8eedda"></i><i style="background:#9a2a5c"></i><i style="background:#c34b8c"></i><i style="background:#e565a8"></i><i style="background:#f38cc5"></i><i style="background:#f3c3da"></i><i style="background:#5f8b1a"></i><i style="background:#789f2a"></i><i style="background:#a4c22a"></i><i style="background:#b8d248"></i><i style="background:#d2e28c"></i><i style="background:#2128ad"></i><i style="background:#3642d8"></i><i style="background:#7348f0"></i><i style="background:#9670f0"></i><i style="background:#b49cf0"></i><i style="background:#ffc60a"></i><i style="background:#ffdb26"></i><i style="background:#ecec28"></i><i style="background:#f5f54c"></i><i style="background:#fbfb84"></i><i style="background:#9e55d8"></i><i style="background:#cc55e8"></i><i style="background:#d874ee"></i><i style="background:#c58cee"></i><i style="background:#dca8f4"></i><i style="background:#2f7e47"></i><i style="background:#3ba35c"></i><i style="background:#52b57c"></i><i style="background:#64c088"></i><i style="background:#96dca6"></i><i style="background:#e53628"></i><i style="background:#fa4a3c"></i><i style="background:#f76464"></i><i style="background:#f98080"></i><i style="background:#fb9a8c"></i><i style="background:#2647a8"></i><i style="background:#2e5ad2"></i><i style="background:#3a6cf4"></i><i style="background:#6a94f6"></i><i style="background:#94b6f2"></i><i style="background:#7a3300"></i><i style="background:#9a4408"></i><i style="background:#b24e25"></i><i style="background:#d86038"></i><i style="background:#e47c5c"></i><i style="background:#1688d8"></i><i style="background:#2aa2f4"></i><i style="background:#40b2fa"></i><i style="background:#44c8fa"></i><i style="background:#68d8fe"></i><i style="background:#7a4d33"></i><i style="background:#a4623c"></i><i style="background:#b87850"></i><i style="background:#d08a64"></i><i style="background:#f4a278"></i><i style="background:#8d7d70"></i><i style="background:#b0ab9c"></i><i style="background:#cdcaba"></i><i style="background:#e4e0cc"></i><i style="background:#f5f0dc"></i><i style="background:#1b1b1b"></i><i style="background:#2f2f2f"></i><i style="background:#4a4a4a"></i><i style="background:#606060"></i><i style="background:#7a7a7a"></i><i style="background:#bcbcbc"></i><i style="background:#c8c8c8"></i><i style="background:#dadada"></i><i style="background:#e8e8e8"></i><i style="background:#f2f2f2"></i></div>
</body></html>
